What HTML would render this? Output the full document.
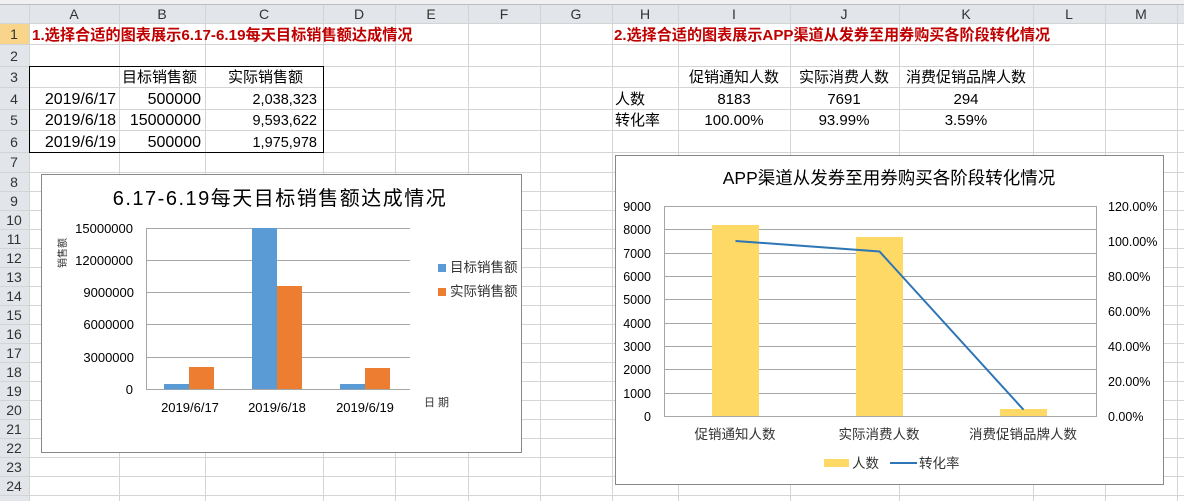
<!DOCTYPE html>
<html><head><meta charset="utf-8"><style>
body{margin:0;width:1184px;height:501px;overflow:hidden;background:#fff}
svg{display:block}
text{font-family:"Liberation Sans","Noto Sans CJK SC",sans-serif}
</style></head><body>
<svg width="1184" height="501" viewBox="0 0 1184 501" xmlns="http://www.w3.org/2000/svg">
<rect x="0" y="0" width="1184" height="501" fill="#fff"/>
<rect x="0" y="0" width="1184" height="5" fill="#f0f0f0"/>
<line x1="0" y1="4.5" x2="1184" y2="4.5" stroke="#b8bcc4"/>
<rect x="0" y="5" width="1184" height="18" fill="#e2e5ea"/>
<rect x="0" y="23" width="29" height="478" fill="#e2e5ea"/>
<rect x="0" y="23" width="29" height="21.5" fill="#f8d58b"/>
<g stroke="#d4d4d4" stroke-width="1">
<line x1="29.5" y1="5" x2="29.5" y2="501"/><line x1="119.5" y1="5" x2="119.5" y2="501"/><line x1="205.5" y1="5" x2="205.5" y2="501"/><line x1="323.5" y1="5" x2="323.5" y2="501"/><line x1="395.5" y1="5" x2="395.5" y2="501"/><line x1="468.5" y1="5" x2="468.5" y2="501"/><line x1="540.5" y1="5" x2="540.5" y2="501"/><line x1="612.5" y1="5" x2="612.5" y2="501"/><line x1="678.5" y1="5" x2="678.5" y2="501"/><line x1="790.5" y1="5" x2="790.5" y2="501"/><line x1="899.5" y1="5" x2="899.5" y2="501"/><line x1="1033.5" y1="5" x2="1033.5" y2="501"/><line x1="1105.5" y1="5" x2="1105.5" y2="501"/><line x1="1177.5" y1="5" x2="1177.5" y2="501"/>
<line x1="0" y1="23.5" x2="1184" y2="23.5"/><line x1="0" y1="44.5" x2="1184" y2="44.5"/><line x1="0" y1="66.5" x2="1184" y2="66.5"/><line x1="0" y1="87.5" x2="1184" y2="87.5"/><line x1="0" y1="109.5" x2="1184" y2="109.5"/><line x1="0" y1="130.5" x2="1184" y2="130.5"/><line x1="0" y1="152.5" x2="1184" y2="152.5"/><line x1="0" y1="172.5" x2="1184" y2="172.5"/><line x1="0" y1="191.5" x2="1184" y2="191.5"/><line x1="0" y1="210.5" x2="1184" y2="210.5"/><line x1="0" y1="229.5" x2="1184" y2="229.5"/><line x1="0" y1="248.5" x2="1184" y2="248.5"/><line x1="0" y1="267.5" x2="1184" y2="267.5"/><line x1="0" y1="286.5" x2="1184" y2="286.5"/><line x1="0" y1="305.5" x2="1184" y2="305.5"/><line x1="0" y1="324.5" x2="1184" y2="324.5"/><line x1="0" y1="343.5" x2="1184" y2="343.5"/><line x1="0" y1="362.5" x2="1184" y2="362.5"/><line x1="0" y1="381.5" x2="1184" y2="381.5"/><line x1="0" y1="400.5" x2="1184" y2="400.5"/><line x1="0" y1="419.5" x2="1184" y2="419.5"/><line x1="0" y1="438.5" x2="1184" y2="438.5"/><line x1="0" y1="457.5" x2="1184" y2="457.5"/><line x1="0" y1="476.5" x2="1184" y2="476.5"/><line x1="0" y1="495.5" x2="1184" y2="495.5"/>
</g>
<g font-size="14" fill="#333" text-anchor="middle">
<text x="74" y="19">A</text><text x="162" y="19">B</text><text x="264" y="19">C</text><text x="359" y="19">D</text><text x="431" y="19">E</text><text x="504" y="19">F</text><text x="576" y="19">G</text><text x="645" y="19">H</text><text x="734" y="19">I</text><text x="844" y="19">J</text><text x="966" y="19">K</text><text x="1069" y="19">L</text><text x="1141" y="19">M</text>
<text x="14" y="39">1</text><text x="14" y="61">2</text><text x="14" y="82">3</text><text x="14" y="104">4</text><text x="14" y="125">5</text><text x="14" y="147">6</text><text x="14" y="167">7</text><text x="14" y="187">8</text><text x="14" y="206">9</text><text x="14" y="225">10</text><text x="14" y="244">11</text><text x="14" y="263">12</text><text x="14" y="282">13</text><text x="14" y="301">14</text><text x="14" y="320">15</text><text x="14" y="339">16</text><text x="14" y="358">17</text><text x="14" y="377">18</text><text x="14" y="396">19</text><text x="14" y="415">20</text><text x="14" y="434">21</text><text x="14" y="453">22</text><text x="14" y="472">23</text><text x="14" y="491">24</text>
</g>
<text x="32" y="40" font-size="15.2" font-weight="bold" fill="#c00000">1.选择合适的图表展示6.17-6.19每天目标销售额达成情况</text>
<text x="614" y="40" font-size="15.1" font-weight="bold" fill="#c00000">2.选择合适的图表展示APP渠道从发券至用券购买各阶段转化情况</text>
<rect x="29.5" y="66.5" width="294" height="86" fill="none" stroke="#000"/>
<g font-size="15" fill="#000">
<text x="122" y="82">目标销售额</text><text x="228" y="82">实际销售额</text>
<g text-anchor="end" font-size="16"><text x="116" y="104">2019/6/17</text><text x="116" y="125">2019/6/18</text><text x="116" y="147">2019/6/19</text>
<text x="201" y="104">500000</text><text x="201" y="125">15000000</text><text x="201" y="147">500000</text></g>
<g text-anchor="end" font-size="14.5"><text x="317" y="104">2,038,323</text><text x="317" y="125">9,593,622</text><text x="317" y="147">1,975,978</text></g>
</g>
<g font-size="15" fill="#000" text-anchor="middle">
<text x="734" y="82">促销通知人数</text><text x="844" y="82">实际消费人数</text><text x="966" y="82">消费促销品牌人数</text>
<text x="734" y="104">8183</text><text x="844" y="104">7691</text><text x="966" y="104">294</text>
<text x="734" y="125">100.00%</text><text x="844" y="125">93.99%</text><text x="966" y="125">3.59%</text>
<text x="615" y="104" text-anchor="start">人数</text><text x="615" y="125" text-anchor="start">转化率</text>
</g>
<rect x="41.5" y="174.5" width="480" height="278" fill="#fff" stroke="#888"/>
<text x="280" y="205" font-size="20" text-anchor="middle" fill="#000" font-family="Liberation Serif,'Noto Serif CJK SC',serif" letter-spacing="1.5">6.17-6.19每天目标销售额达成情况</text>
<g stroke="#a6a6a6"><line x1="146" y1="228.5" x2="410" y2="228.5"/><line x1="146" y1="260.5" x2="410" y2="260.5"/><line x1="146" y1="292.5" x2="410" y2="292.5"/><line x1="146" y1="324.5" x2="410" y2="324.5"/><line x1="146" y1="357.5" x2="410" y2="357.5"/><line x1="146" y1="389.5" x2="410" y2="389.5"/><line x1="146.5" y1="228" x2="146.5" y2="390"/></g>
<g fill="#5b9bd5"><rect x="164" y="384" width="25" height="5.4"/><rect x="252" y="228" width="25" height="161"/><rect x="340" y="384" width="25" height="5.4"/></g>
<g fill="#ed7d31"><rect x="189" y="367" width="25" height="22"/><rect x="277" y="286" width="25" height="103"/><rect x="365" y="368" width="25" height="21"/></g>
<g font-size="13" fill="#000" text-anchor="end"><text x="133" y="233">15000000</text><text x="133" y="265">12000000</text><text x="134" y="297">9000000</text><text x="134" y="329">6000000</text><text x="134" y="362">3000000</text><text x="133" y="394">0</text></g>
<g font-size="13" fill="#000" text-anchor="middle"><text x="190" y="412">2019/6/17</text><text x="277" y="412">2019/6/18</text><text x="365" y="412">2019/6/19</text></g>
<text x="424" y="406" font-size="11" fill="#333">日 期</text>
<text transform="translate(66,268) rotate(-90)" font-size="10" fill="#333">销售额</text>
<rect x="438" y="264" width="8" height="8" fill="#5b9bd5"/><text x="450" y="272" font-size="13.5" fill="#333">目标销售额</text>
<rect x="438" y="288" width="8" height="8" fill="#ed7d31"/><text x="450" y="296" font-size="13.5" fill="#333">实际销售额</text>
<rect x="615.5" y="155.5" width="548" height="329" fill="#fff" stroke="#888"/>
<text x="889" y="184" font-size="17.5" text-anchor="middle" fill="#000">APP渠道从发券至用券购买各阶段转化情况</text>
<g stroke="#a6a6a6"><line x1="664" y1="206.5" x2="1096" y2="206.5"/><line x1="664" y1="229.5" x2="1096" y2="229.5"/><line x1="664" y1="253.5" x2="1096" y2="253.5"/><line x1="664" y1="276.5" x2="1096" y2="276.5"/><line x1="664" y1="299.5" x2="1096" y2="299.5"/><line x1="664" y1="323.5" x2="1096" y2="323.5"/><line x1="664" y1="346.5" x2="1096" y2="346.5"/><line x1="664" y1="369.5" x2="1096" y2="369.5"/><line x1="664" y1="393.5" x2="1096" y2="393.5"/><line x1="664" y1="416.5" x2="1096" y2="416.5"/><line x1="664.5" y1="206" x2="664.5" y2="417"/><line x1="1096.5" y1="206" x2="1096.5" y2="417"/></g>
<g fill="#ffd966"><rect x="712" y="225" width="47" height="191"/><rect x="856" y="237" width="47" height="179"/><rect x="1000" y="409" width="47" height="7"/></g>
<polyline points="735.5,241 879.5,251.5 1023.5,409.7" fill="none" stroke="#2e75b6" stroke-width="2"/>
<g font-size="12.5" fill="#000" text-anchor="end"><text x="651" y="211">9000</text><text x="651" y="234">8000</text><text x="651" y="258">7000</text><text x="651" y="281">6000</text><text x="651" y="304">5000</text><text x="651" y="328">4000</text><text x="651" y="351">3000</text><text x="651" y="374">2000</text><text x="651" y="398">1000</text><text x="651" y="421">0</text></g>
<g font-size="12.5" fill="#000"><text x="1108" y="211">120.00%</text><text x="1108" y="246">100.00%</text><text x="1108" y="281">80.00%</text><text x="1108" y="316">60.00%</text><text x="1108" y="351">40.00%</text><text x="1108" y="386">20.00%</text><text x="1108" y="421">0.00%</text></g>
<g font-size="13.5" fill="#333" text-anchor="middle"><text x="735" y="439">促销通知人数</text><text x="879" y="439">实际消费人数</text><text x="1023" y="439">消费促销品牌人数</text></g>
<rect x="824" y="459" width="25" height="8" fill="#ffd966"/><text x="852" y="468" font-size="13.5" fill="#333">人数</text>
<line x1="890" y1="463" x2="917" y2="463" stroke="#2e75b6" stroke-width="2"/><text x="919" y="468" font-size="13.5" fill="#333">转化率</text>
</svg>
</body></html>
